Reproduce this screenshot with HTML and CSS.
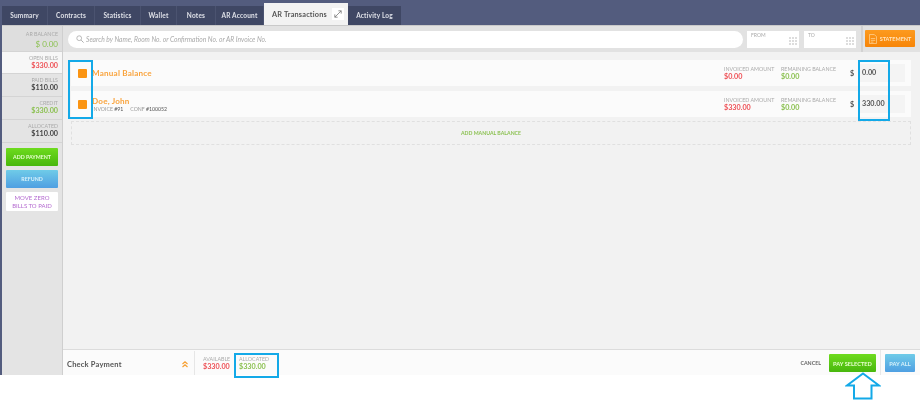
FILE: index.html
```html
<!DOCTYPE html>
<html lang="en">
<head>
<meta charset="utf-8">
<title>AR Transactions</title>
<link rel="stylesheet" href="styles.css">
</head>
<body>
<div class="app">
  <nav class="tabbar">
    <a class="tab w46">Summary</a>
    <a class="tab w47">Contracts</a>
    <a class="tab w46">Statistics</a>
    <a class="tab w36">Wallet</a>
    <a class="tab w39">Notes</a>
    <a class="tab w48">AR Account</a>
    <a class="tab active">AR Transactions
      <span class="pop"><svg width="8" height="8" viewBox="0 0 10 10"><path d="M1 9 9 1M5.500 1H9V4.500M1 5.500V9H4.500" fill="none" stroke="#777" stroke-width="1"/></svg></span>
    </a>
    <a class="tab w53">Activity Log</a>
  </nav>
  <div class="body">
    <aside class="side">
      <div class="stat head"><span class="lbl">AR BALANCE</span><span class="val big green">$ 0.00</span></div>
      <div class="stat on"><span class="lbl">OPEN BILLS</span><span class="val red">$330.00</span></div>
      <div class="stat"><span class="lbl">PAID BILLS</span><span class="val">$110.00</span></div>
      <div class="stat"><span class="lbl">CREDIT</span><span class="val green">$330.00</span></div>
      <div class="stat"><span class="lbl">ALLOCATED</span><span class="val">$110.00</span></div>
      <div class="actions">
        <button class="btn green-btn">ADD PAYMENT</button>
        <button class="btn blue-btn">REFUND</button>
        <button class="btn white-btn">MOVE ZERO<br>BILLS TO PAID</button>
      </div>
    </aside>
    <main class="main">
      <div class="toolbar">
        <div class="search">
          <svg width="8" height="8" viewBox="0 0 10 10"><circle cx="4" cy="4" r="3" fill="none" stroke="#aaa" stroke-width="1"/><path d="M6.500 6.500 9.500 9.500" stroke="#aaa" stroke-width="1.200"/></svg>
          <span>Search by Name, Room No. or Confirmation No. or AR Invoice No.</span>
        </div>
        <div class="date"><span>FROM</span><i class="grid"></i></div>
        <div class="date"><span>TO</span><i class="grid"></i></div>
        <div class="tool-end">
          <button class="statement">
            <svg width="8" height="10" viewBox="0 0 9 11"><path d="M.5.500H6L8.500 3V10.500H.5Z M2 5H7M2 7H7M2 9H5" fill="none" stroke="#ffd9a0" stroke-width=".8"/></svg>
            STATEMENT
          </button>
        </div>
      </div>
      <div class="list">
        <div class="row">
          <span class="check"></span>
          <div class="who"><div class="name">Manual Balance</div></div>
          <div class="fig w57"><span class="lbl">INVOICED AMOUNT</span><span class="val red">$0.00</span></div>
          <div class="fig w69"><span class="lbl">REMAINING BALANCE</span><span class="val green">$0.00</span></div>
          <span class="cur">$</span>
          <div class="amt">0.00</div>
        </div>
        <div class="row">
          <span class="check"></span>
          <div class="who"><div class="name">Doe, John</div><div class="meta">INVOICE <b>#91</b><em>CONF <b>#100052</b></em></div></div>
          <div class="fig w57"><span class="lbl">INVOICED AMOUNT</span><span class="val red">$330.00</span></div>
          <div class="fig w69"><span class="lbl">REMAINING BALANCE</span><span class="val green">$0.00</span></div>
          <span class="cur">$</span>
          <div class="amt">330.00</div>
        </div>
        <div class="add">ADD MANUAL BALANCE</div>
      </div>
      <footer class="foot">
        <div class="title">Check Payment</div>
        <svg class="chev" width="6" height="7" viewBox="0 0 6 7"><path d="M.5 3 3 .8 5.500 3M.5 6 3 3.800 5.500 6" fill="none" stroke="#f7a033" stroke-width="1.200"/></svg>
        <div class="fig pay first"><span class="lbl">AVAILABLE</span><span class="val red">$330.00</span></div>
        <div class="fig pay"><span class="lbl">ALLOCATED</span><span class="val green">$330.00</span></div>
        <span class="cancel">CANCEL</span>
        <button class="btn green-btn paysel">PAY SELECTED</button>
        <span class="vsep"></span>
        <button class="btn blue-btn payall">PAY ALL</button>
      </footer>
    </main>
  </div>
</div>
<div class="mark m1"></div>
<div class="mark m2"></div>
<div class="mark m3"></div>
<svg class="arrow" width="36" height="28" viewBox="0 0 36 28"><path d="M18 1.500 34 13.500H26.500V26.500H9V13.500H2Z" fill="#fff" stroke="#13a9e8" stroke-width="2"/></svg>
</body>
</html>
```
FILE: styles.css
```css
* { box-sizing: border-box; }
html, body { margin: 0; height: 411px; overflow: hidden; background: #fff; }
body { position: relative; font-family: Lato, "Open Sans", sans-serif; filter: blur(.4px); }
.app { width: 920px; height: 375px; display: flex; flex-direction: column; background: #535c7e; padding-left: 2px; }

.tabbar { height: 25px; display: flex; align-items: flex-end; flex: none; }
.tab { height: 19px; background: #3f4764; color: #dfe1e8; font-size: 6.500px; font-weight: 700; letter-spacing: .2px; display: flex; align-items: center; justify-content: center; border-right: 1px solid #4b5370; }
.w46 { width: 46px; } .w47 { width: 47px; } .w36 { width: 36px; } .w39 { width: 39px; } .w48 { width: 48px; } .w53 { width: 53px; border-right: 0; }
.tab.active { width: 84px; height: 22px; background: #f2f2f2; color: #555; font-size: 7.300px; gap: 5px; border: 0; justify-content: flex-start; padding-left: 8px; }
.pop { width: 12px; height: 12px; background: #fff; display: flex; align-items: center; justify-content: center; }

.body { flex: 1; display: flex; min-height: 0; border-top: 1px solid #c9c9c9; }
.side { width: 61px; background: #e4e4e4; border-right: 1px solid #cfcfcf; flex: none; }
.stat { height: 23px; padding: 3px 4px 0 0; display: flex; flex-direction: column; align-items: flex-end; border-bottom: 1px solid #d4d4d4; line-height: 8px; }
.stat.head { height: 26px; padding-top: 5px; background: #dedede; }
.stat.on { height: 22px; background: #f7f7f7; }
.lbl { font-size: 5.300px; color: #aaa; line-height: 7px; white-space: nowrap; }
.val { font-size: 7.200px; font-weight: 700; color: #444; line-height: 8px; white-space: nowrap; }
.val.big { font-size: 8px; line-height: 11px; margin-top: 1px; font-weight: 400; }
.val.red { color: #ee5257; }
.val.green { color: #8cc152; }
.actions { display: flex; flex-direction: column; gap: 4px; padding: 5px 4px 0 4px; }
.btn { border: 0; padding: 0; font-family: inherit; font-size: 5.300px; font-weight: 700; color: #fff; border-radius: 1px; }
.actions .btn { width: 52px; height: 18px; }
.green-btn { background: linear-gradient(#6edb1e, #48b70d); color: #e8ffd0; }
.blue-btn { background: linear-gradient(#6fcbe8, #4f9fe2); color: #d8f2fb; }
.actions .white-btn { background: #fff; color: #b46ad0; height: 19px; line-height: 7.500px; font-size: 6px; font-weight: 400; }

.main { flex: 1; display: flex; flex-direction: column; background: #f2f2f2; min-width: 0; }
.toolbar { height: 26px; flex: none; background: #e2e2e2; display: flex; align-items: center; padding-left: 5px; gap: 5px; }
.search { width: 675px; height: 17px; margin-right: -1px; background: #fff; border-radius: 9px; display: flex; align-items: center; gap: 2px; padding-left: 8px; font-size: 6.700px; font-style: italic; color: #aaa; }
.date { width: 52px; height: 17px; background: #fff; padding: 1px 2px 0 4px; font-size: 5px; color: #aaa; display: flex; justify-content: space-between; }
.grid { width: 9px; height: 9px; align-self: flex-end; margin-bottom: 3px; background-color: #ddd; background-image: linear-gradient(#fff 1px, transparent 1px), linear-gradient(90deg, #fff 1px, transparent 1px); background-size: 3px 3px; }
.tool-end { height: 26px; border-left: 2px solid #d2d2d2; padding: 4px 0 0 2px; }
.statement { width: 50px; height: 17px; border: 0; padding: 0; border-radius: 1px; background: linear-gradient(#fd9a1e, #f78508); color: #ffe3bb; font-family: inherit; font-size: 5.500px; font-weight: 700; display: flex; align-items: center; justify-content: center; gap: 3px; }

.list { flex: 1; display: flex; flex-direction: column; gap: 5px; padding: 8px 9px 0 8px; min-height: 0; }
.row { height: 26px; flex: none; background: #fbfbfb; display: flex; align-items: center; padding-left: 7px; }
.check { width: 9px; height: 9px; margin-right: 5px; background: #fb9412; border-radius: 1px; flex: none; }
.who { width: 632px; flex: none; }
.name { font-size: 8.100px; font-weight: 700; color: #f9a33c; letter-spacing: .2px; line-height: 10px; }
.meta { font-size: 5.200px; color: #999; line-height: 6px; }
.meta b { color: #555; font-weight: 400; }
.meta em { font-style: normal; margin-left: 7px; }
.fig { display: flex; flex-direction: column; }
.w57 { width: 57px; }
.w69 { width: 69px; }
.cur { width: 10px; font-size: 7.200px; color: #555; font-weight: 700; }
.amt { width: 45px; height: 18px; background: #f4f4f4; color: #555; font-size: 7.200px; font-weight: 700; padding-left: 2px; line-height: 18px; }
.add { height: 24px; flex: none; margin-top: -1px; border: 1px dashed #e0e0e0; color: #8cc152; font-size: 5.200px; font-weight: 700; text-align: center; line-height: 22px; }

.foot { height: 26px; flex: none; background: #fbfbfb; border-top: 1px solid #dcdcdc; display: flex; align-items: center; padding: 0 5px 0 4px; }
.title { width: 115px; padding-top: 3px; font-size: 7.500px; font-weight: 700; color: #555; letter-spacing: .2px; }
.chev { margin: 3px 6px 0 0; }
.pay { width: 30px; line-height: 7px; padding-top: 2px; }
.pay.first { border-left: 1px solid #e6e6e6; padding-left: 8px; width: 45px; height: 24px; justify-content: center; }
.cancel { margin-left: auto; margin-right: 8px; font-size: 5.300px; font-weight: 700; color: #666; white-space: nowrap; }
.paysel { width: 47px; height: 18px; font-size: 5.700px; margin-top: 1px; }
.vsep { width: 1px; height: 25px; background: #e8e8e8; margin: 0 4px; }
.payall { width: 30px; height: 18px; font-size: 5.700px; margin-top: 1px; }

.mark { position: absolute; border: 2px solid #13a9e8; }
.m1 { left: 68px; top: 60px; width: 25px; height: 59px; }
.m2 { left: 858px; top: 60px; width: 32px; height: 61px; }
.m3 { left: 234px; top: 353px; width: 45px; height: 25px; }
.arrow { position: absolute; left: 845px; top: 372px; }
```
